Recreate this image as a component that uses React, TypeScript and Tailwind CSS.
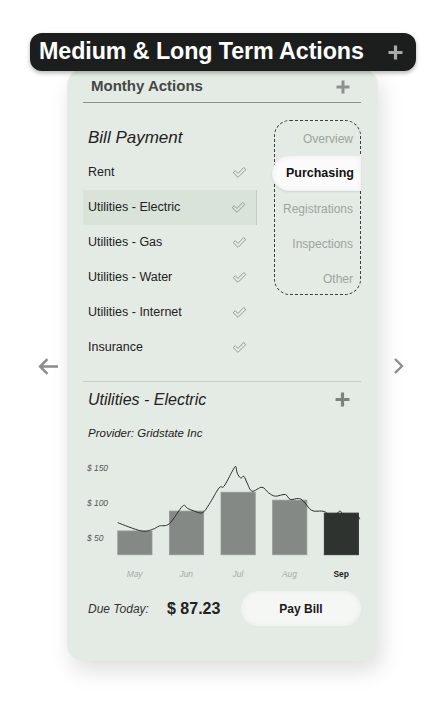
import React from 'react'

const bills = ['Rent', 'Utilities - Electric', 'Utilities - Gas', 'Utilities - Water', 'Utilities - Internet', 'Insurance']
const tabs = ['Overview', 'Purchasing', 'Registrations', 'Inspections', 'Other']

const bars = [
  { m: 'May', x: 35, top: 75 },
  { m: 'Jun', x: 87, top: 55 },
  { m: 'Jul', x: 139, top: 36 },
  { m: 'Aug', x: 191, top: 44 },
  { m: 'Sep', x: 243, top: 57, current: true },
]

const linePts: [number, number][] = [
  [35, 66.7], [58.7, 75], [70.3, 73.3], [77, 70], [87, 67.7], [100.3, 50], [105.3, 52.3], [112, 55],
  [120.3, 56.7], [127, 48.3], [137, 31.7], [142, 30], [150.3, 15], [153.7, 10], [155.3, 16.7],
  [158.7, 21.7], [162, 20], [165.3, 26.7], [170.3, 35], [180.3, 31], [187, 36.7], [193.7, 40],
  [203.7, 38.3], [208.7, 43.3], [217, 42.3], [222, 45], [230.3, 54.3], [240.3, 55], [245.3, 56.7],
  [250.3, 63.3], [253.7, 60], [258.7, 55], [262, 58.3], [267, 60], [277, 60.7], [278.7, 63.3],
]

// catmull-rom -> bezier so the line looks hand-smoothed
function smoothPath(p: [number, number][]) {
  let d = `M${p[0][0]},${p[0][1]}`
  for (let i = 0; i < p.length - 1; i++) {
    const p0 = p[i - 1] || p[i]
    const p1 = p[i]
    const p2 = p[i + 1]
    const p3 = p[i + 2] || p2
    const c1x = p1[0] + (p2[0] - p0[0]) / 6
    const c1y = p1[1] + (p2[1] - p0[1]) / 6
    const c2x = p2[0] - (p3[0] - p1[0]) / 6
    const c2y = p2[1] - (p3[1] - p1[1]) / 6
    d += ` C${c1x.toFixed(1)},${c1y.toFixed(1)} ${c2x.toFixed(1)},${c2y.toFixed(1)} ${p2[0]},${p2[1]}`
  }
  return d
}

function Plus({ className }: { className: string }) {
  return (
    <svg viewBox="0 0 14 14" className={className}>
      <path d="M7 0.5v13M0.5 7h13" stroke="currentColor" strokeWidth="3" />
    </svg>
  )
}

function Check() {
  return (
    <svg viewBox="0 0 16 14" className="w-[15px] h-[13px]">
      <path
        d="M1.2 7.2 L3.4 5 L6.4 8 L12.6 1.6 L14.8 3.8 L6.4 12.2 Z"
        fill="none"
        stroke="#8e948e"
        strokeWidth="1"
        strokeLinejoin="round"
      />
    </svg>
  )
}

function Chart() {
  return (
    <svg viewBox="0 0 280 130" className="w-[278px] h-[130px]" style={{ fontFamily: '"Liberation Sans", Arial, sans-serif' }}>
      <text x="4" y="15" fontSize="8.5" fontStyle="italic" fill="#555">$ 150</text>
      <text x="4" y="50" fontSize="8.5" fontStyle="italic" fill="#555">$ 100</text>
      <text x="4" y="85" fontSize="8.5" fontStyle="italic" fill="#555">$ 50</text>
      {bars.map((b) => (
        <g key={b.m}>
          <rect
            x={b.x}
            y={b.top}
            width="34.5"
            height={99 - b.top}
            fill={b.current ? '#2f332f' : '#858985'}
            stroke={b.current ? '#2a2d2a' : '#959a95'}
            strokeWidth="0.8"
          />
          <text
            x={b.x + 17}
            y="121"
            fontSize="8.5"
            textAnchor="middle"
            fontStyle={b.current ? 'normal' : 'italic'}
            fontWeight={b.current ? 'bold' : 'normal'}
            fill={b.current ? '#222' : '#a7aca7'}
          >
            {b.m}
          </text>
        </g>
      ))}
      <path d={smoothPath(linePts)} fill="none" stroke="#2a2d2a" strokeWidth="1" strokeLinejoin="round" />
    </svg>
  )
}

export default function App() {
  return (
    <div className="w-[446px] h-[728px] bg-white flex flex-col items-center font-['Liberation_Sans',Arial,sans-serif] overflow-hidden">
      <header className="relative z-10 mt-[33px] w-[386px] h-[38px] rounded-xl bg-[#1c1e1e] flex items-center justify-between pl-[9px] pr-[13px] shadow-[0_2px_4px_rgba(0,0,0,0.3)]">
        <h1 className="text-white font-bold text-[23.3px] leading-none tracking-[-0.1px]">Medium &amp; Long Term Actions</h1>
        <Plus className="w-[15px] h-[15px] text-[#a9aca9]" />
      </header>

      <div className="flex items-center w-full">
        <div className="w-[67px] flex justify-end pr-[8px]">
          <svg viewBox="0 0 20 16" className="w-[21px] h-[17px]">
            <path d="M19 8H2M9 1L2 8l7 7" fill="none" stroke="#8a8d8a" strokeWidth="2.4" />
          </svg>
        </div>

        <main className="w-[311px] -mt-[2px] pt-[2px] pb-[35px] pl-4 pr-[17px] bg-[#e4ebe4] rounded-2xl shadow-[4px_10px_22px_rgba(0,0,0,0.13)]">
          <div className="h-[32px] flex items-center justify-between pl-2 pr-[11px] border-b border-[#8c918c]">
            <h2 className="text-[15px] font-bold text-[#454845]">Monthy Actions</h2>
            <Plus className="w-[14px] h-[14px] text-[#8d908d]" />
          </div>

          <section className="mt-[17px] flex justify-between">
            <div className="w-[174px]">
              <h3 className="h-[35px] flex items-center pl-[5px] text-[17px] italic text-[#222]">Bill Payment</h3>
              {bills.map((b) => (
                <div
                  key={b}
                  className={`h-[35px] flex items-center justify-between pl-[5px] pr-[10px] text-[12.5px] text-[#222] ${
                    b === 'Utilities - Electric' ? 'bg-[#d9e3da] border-r border-[#c3ccc3]' : ''
                  }`}
                >
                  <span>{b}</span>
                  <Check />
                </div>
              ))}
            </div>

            <div className="w-[87px] h-[175px] border border-dashed border-[#3c3f3c] rounded-2xl relative">
              {tabs.map((t) =>
                t === 'Purchasing' ? (
                  <div
                    key={t}
                    className="h-[35px] -mx-[1px] -ml-[3px] flex items-center justify-end pr-[7px] bg-[#fafbfa] rounded-l-full rounded-r-lg shadow-[inset_0_0_6px_rgba(0,0,0,0.06),0_1px_2px_rgba(0,0,0,0.1)] text-[12.5px] font-bold text-[#111]"
                  >
                    {t}
                  </div>
                ) : (
                  <div key={t} className="h-[35px] flex items-center justify-end pr-[7px] text-[12px] text-[#9ea39e]">
                    {t}
                  </div>
                ),
              )}
            </div>
          </section>

          <section className="mt-[16px] border-t border-[#c5ccc5]">
            <div className="h-[35px] flex items-center justify-between pl-[5px] pr-[11px]">
              <h3 className="text-[16px] italic text-[#222]">Utilities - Electric</h3>
              <Plus className="w-[15px] h-[15px] text-[#7e827e]" />
            </div>
            <p className="h-[34px] flex items-center pl-[5px] text-[11.5px] italic text-[#222]">Provider: Gridstate Inc</p>
            <div className="mt-[5px]">
              <Chart />
            </div>
          </section>

          <div className="mt-[5px] h-[35px] flex items-center">
            <span className="pl-[5px] w-[84px] text-[12px] italic text-[#333]">Due Today:</span>
            <span className="w-[74px] text-[16px] font-bold text-[#222]">$ 87.23</span>
            <button
              type="button"
              className="ml-auto w-[120px] h-[35px] rounded-full bg-[#f5f7f5] shadow-[inset_0_0_6px_rgba(0,0,0,0.05)] text-[12px] font-bold text-[#1a1a1a]"
            >
              Pay Bill
            </button>
          </div>
        </main>

        <div className="flex-1 flex pl-[15px]">
          <svg viewBox="0 0 12 16" className="w-[12px] h-[16px]">
            <path d="M2 1l7 7-7 7" fill="none" stroke="#8a8d8a" strokeWidth="2.4" />
          </svg>
        </div>
      </div>
    </div>
  )
}
